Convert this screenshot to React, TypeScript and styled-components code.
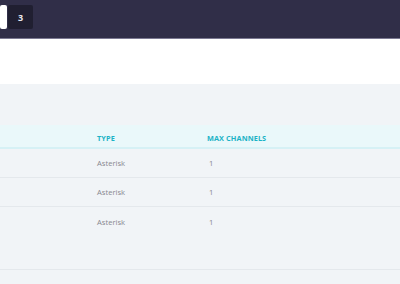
import styled, { createGlobalStyle } from 'styled-components';

const GlobalStyle = createGlobalStyle`
  html, body {
    margin: 0;
    padding: 0;
    background: #f1f4f7;
    font-family: 'Open Sans', 'Noto Sans', sans-serif;
  }
`;

const TopBar = styled.header`
  height: 39px;
  box-sizing: border-box;
  background: #302e48;
  border-bottom: 1px solid #7b7992;
  display: flex;
  align-items: flex-start;
  padding-top: 5px;
  gap: 1px;
`;

const Tab = styled.div<{ $active?: boolean }>`
  height: 24px;
  width: ${(p) => (p.$active ? '7px' : '25px')};
  border-radius: 2px;
  background: ${(p) => (p.$active ? '#ffffff' : '#201f31')};
  color: #e8e8ee;
  font-size: 9px;
  font-weight: 700;
  display: flex;
  align-items: center;
  justify-content: center;
`;

const SubBar = styled.div`
  height: 45px;
  background: #ffffff;
`;

const Content = styled.main`
  padding-top: 41px;
`;

const Table = styled.div`
  border-bottom: 1px solid #e4e8ec;
  min-height: 144px;
`;

const Row = styled.div<{ $head?: boolean }>`
  display: grid;
  grid-template-columns: 97px 110px 1fr;
  align-items: center;
  height: ${(p) => (p.$head ? '24px' : '29px')};
  box-sizing: border-box;
  background: ${(p) => (p.$head ? '#eaf8fa' : 'transparent')};
  border-bottom: ${(p) => (p.$head ? '2px solid #d6f1f5' : '1px solid #e4e8ec')};
  &:last-child {
    border-bottom: none;
  }
`;

const HeadCell = styled.div`
  font-size: 7.3px;
  font-weight: 700;
  color: #1bb3c6;
  letter-spacing: 0.1px;
  padding-top: 3px;
`;

const Cell = styled.div<{ $num?: boolean }>`
  font-size: 7.6px;
  color: #88888f;
  padding-left: ${(p) => (p.$num ? '2px' : '0')};
`;

const trunks = [
  { type: 'Asterisk', channels: 1 },
  { type: 'Asterisk', channels: 1 },
  { type: 'Asterisk', channels: 1 },
];

export default function App() {
  return (
    <>
      <GlobalStyle />
      <TopBar>
        <Tab $active />
        <Tab>3</Tab>
      </TopBar>
      <SubBar />
      <Content>
        <Table>
          <Row $head>
            <span />
            <HeadCell>TYPE</HeadCell>
            <HeadCell>MAX CHANNELS</HeadCell>
          </Row>
          {trunks.map((t, i) => (
            <Row key={i}>
              <span />
              <Cell>{t.type}</Cell>
              <Cell $num>{t.channels}</Cell>
            </Row>
          ))}
        </Table>
      </Content>
    </>
  );
}
